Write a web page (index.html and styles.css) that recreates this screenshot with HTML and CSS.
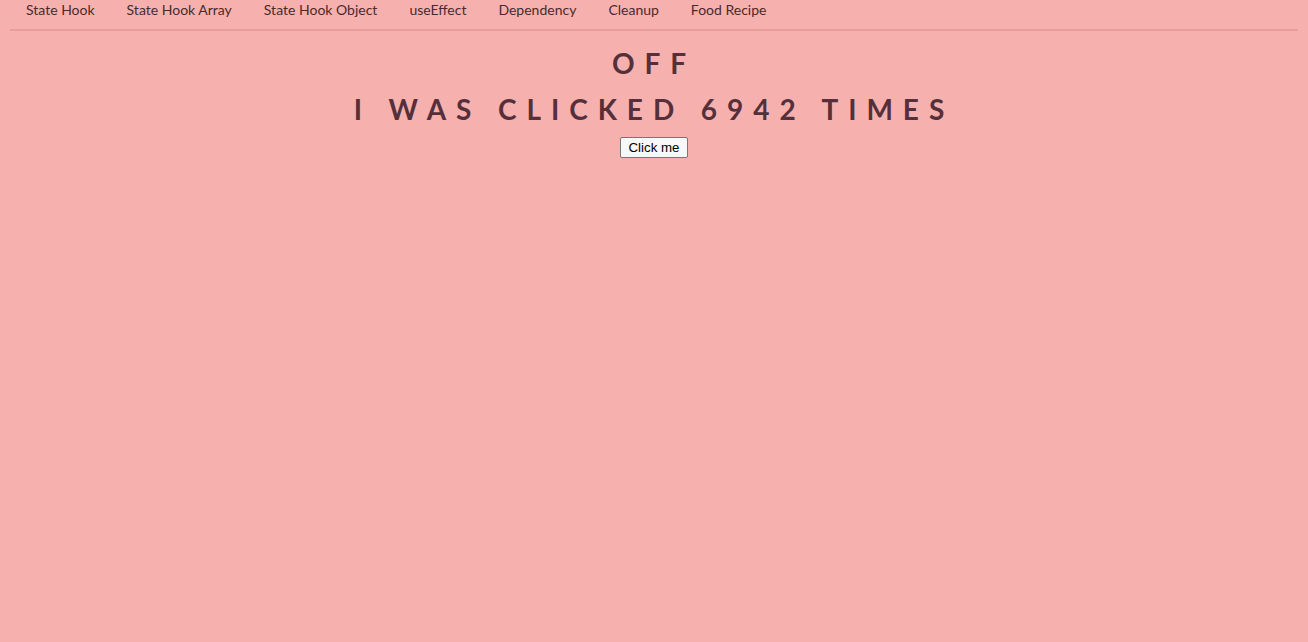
FILE: index.html
```html
<!DOCTYPE html>
<html>
<head>
<meta charset="utf-8">
<link rel="stylesheet" href="styles.css">
</head>
<body>
<nav class="nav">
  <a class="nav-link">State Hook</a>
  <a class="nav-link">State Hook Array</a>
  <a class="nav-link">State Hook Object</a>
  <a class="nav-link">useEffect</a>
  <a class="nav-link">Dependency</a>
  <a class="nav-link">Cleanup</a>
  <a class="nav-link">Food Recipe</a>
</nav>
<main class="main">
  <h1 class="title">OFF</h1>
  <h1 class="title">I WAS CLICKED 6942 TIMES</h1>
  <button class="btn">Click me</button>
</main>
</body>
</html>
```
FILE: styles.css
```css
html, body {
  margin: 0;
  padding: 0;
  height: 100%;
}
body {
  background: #f6b1af;
  font-family: Lato, "Liberation Sans", sans-serif;
  padding: 0 10px;
  box-sizing: border-box;
}
.nav {
  display: flex;
  gap: 32px;
  padding: 1px 16px 0 16px;
  border-bottom: 2px solid #e89d9b;
  box-sizing: border-box;
  height: 31px;
}
.nav-link {
  font-size: 14px;
  color: #4a2a2c;
  line-height: 18px;
}
.main {
  display: flex;
  flex-direction: column;
  align-items: center;
}
.title {
  margin: 0;
  font-size: 28px;
  font-weight: 700;
  letter-spacing: 0.355em;
  color: #55303a;
}
.title:first-child {
  margin-top: 16px;
  line-height: 32px;
}
.title + .title {
  margin-top: 14px;
  line-height: 32px;
}
.btn {
  margin-top: 12px;
  font-family: "Liberation Sans", Arial, sans-serif;
  font-size: 13.3px;
  background: #f8f8f8;
  border: 1px solid #767676;
  border-radius: 2px;
  padding: 2px 8px;
  color: #000;
}
```
